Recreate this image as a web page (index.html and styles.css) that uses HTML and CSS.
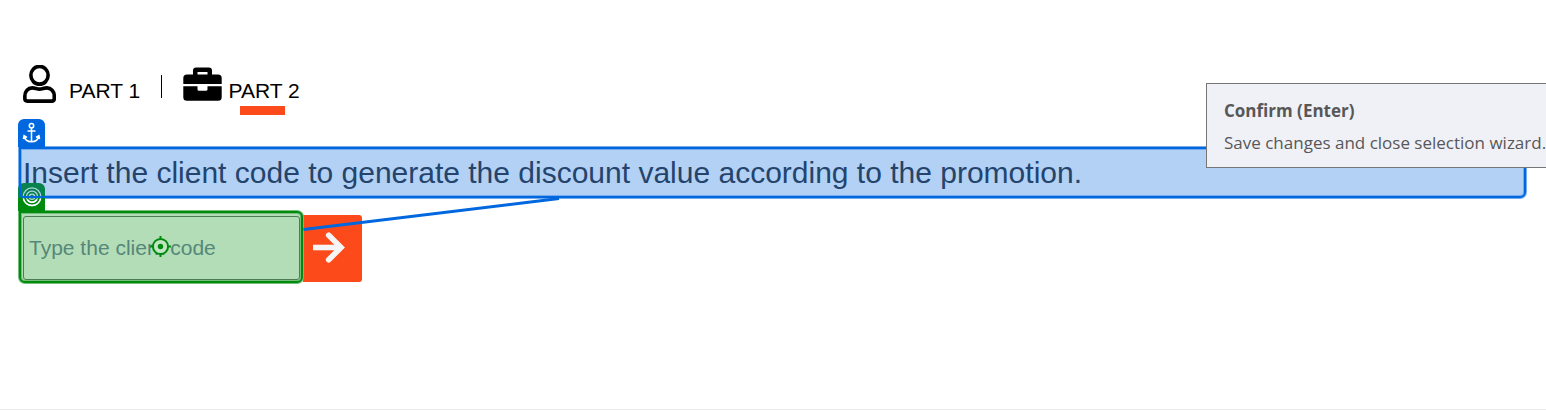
FILE: index.html
```html
<!DOCTYPE html>
<html lang="en">
<head>
<meta charset="utf-8">
<title>Client code</title>
<link rel="stylesheet" href="styles.css">
</head>
<body>
<main class="page">
  <nav class="tabs">
    <a class="tab">
      <svg class="icon-user" viewBox="0 0 34 38" width="33" height="38" preserveAspectRatio="none" fill="none" stroke="#000" stroke-width="3.7"><circle cx="17" cy="10.3" r="8.900"/><path d="M9.500 22.800c3.200 0 4.500 1.300 7.500 1.300s4.300-1.300 7.500-1.300c4.500 0 7.700 3.600 7.700 8.100v2.700c0 1.500-1 2.500-2.500 2.500H4.400c-1.500 0-2.500-1-2.500-2.500v-2.700c0-4.500 3.200-8.100 7.600-8.100z"/></svg>
      <span class="label">PART 1</span>
    </a>
    <span class="divider"></span>
    <a class="tab current">
      <svg class="icon-case" viewBox="0 0 39 35" width="39" height="35"><path fill-rule="evenodd" d="M10 7.500V3.700Q10 .5 13.200.5h12.600Q29 .5 29 3.700v3.800h6q3.700 0 3.700 3.700V17H.3v-5.800q0-3.700 3.700-3.700zM14.500 5v2.500h10V5zM.3 19.300h14.200v3q0 1.500 1.500 1.500h7q1.500 0 1.500-1.500v-3h14.200v11q0 3.500-3.700 3.500H4Q.3 33.800.3 30.300z"/></svg>
      <span class="label">PART 2</span>
    </a>
  </nav>
  <section class="anchor-box">
    <span class="tag tag-anchor"><svg viewBox="0 0 27 28" width="27" height="28" fill="none" stroke="#fff" stroke-width="1.5"><circle cx="13.500" cy="6.800" r="2.200"/><path d="M13.500 9v14M9.500 12h8M6.300 17.500c.6 3.300 3.500 5.200 7.200 5.200s6.600-1.900 7.200-5.200M5.400 20l.7-3.300 2.900 1.700M21.600 20l-.7-3.300-2.900 1.700"/></svg></span>
    <p class="prompt">Insert the client code to generate the discount value according to the promotion.</p>
  </section>
  <form class="code-form">
    <div class="target-box">
      <span class="tag tag-target"></span>
      <div class="field">Type the client code</div>
    </div>
    <div class="submit"><svg viewBox="0 0 34 32" width="34" height="32" fill="none" stroke="#f5f5f5" stroke-width="5.600" stroke-linecap="round" stroke-linejoin="round"><path stroke-linecap="butt" d="M1 15.500h27"/><path stroke-linejoin="miter" d="M16.700 3.300 29 15.500 16.700 27.700"/></svg></div>
  </form>
</main>
<footer class="rule"></footer>
<svg class="overlay" viewBox="0 0 1546 411" width="1546" height="411" fill="none">
  <path d="M303.500 229.600 559 198.500" stroke="#0067df" stroke-width="3"/>
  <g stroke="#b0d2e8" stroke-width="1.300"><circle cx="32" cy="196.700" r="8.800"/><circle cx="32" cy="196.700" r="5.600"/><circle cx="32" cy="196.700" r="2.600"/></g>
  <path d="M23.500 199a8.800 8.800 0 0 0 17 0M27.200 199.500a5.600 5.600 0 0 0 9.600 0" stroke="#fff" stroke-width="1.500"/>
  <path d="M20 184v8.500q0 4.500 4 4.500H60" stroke="#0067df" stroke-width="2"/>
  <g stroke="#008a0e" stroke-width="2"><circle cx="160.500" cy="246.500" r="7.600" fill="#c1e4c3"/><path d="M160.500 236v4M160.500 253v4M150 246.500h4M167 246.500h4"/></g>
  <circle cx="160.500" cy="246.500" r="2.700" fill="#008a0e"/>
</svg>
<aside class="tooltip">
  <strong class="tip-title">Confirm (Enter)</strong>
  <span class="tip-text">Save changes and close selection wizard.</span>
</aside>
</body>
</html>
```
FILE: styles.css
```css
* { box-sizing: border-box; }
body {
  margin: 0;
  height: 411px;
  overflow: hidden;
  background: #fff;
  color: #000;
  font-family: "Liberation Sans", Arial, sans-serif;
  position: relative;
  display: flex;
  flex-direction: column;
}
.page { flex: 1; padding: 65px 20px 0 19px; }
.tabs { display: flex; height: 82px; }
.tab { display: flex; position: relative; }
.icon-user { margin: 0 13px 0 4px; }
.icon-case { margin: 2px 6.5px 0 0; }
.label { font-size: 21px; line-height: 24px; margin-top: 14px; white-space: nowrap; width: 72px; }
.divider { width: 1px; height: 23px; margin: 10px 21px 0 20px; background: #000; }
.current::after {
  content: "";
  position: absolute;
  left: 57.3px;
  top: 41px;
  width: 45px;
  height: 9px;
  background: #fc4a1a;
}
.anchor-box, .target-box { position: relative; border: 2px solid; border-radius: 0 6px 6px 6px; }
.anchor-box {
  height: 51px;
  width: 1507px;
  border-color: #0067df;
  background: #b3d1f5;
  box-shadow: 0 0 0 1px #73abed, inset 0 0 0 1px #73abed;
}
.prompt {
  margin: 0 0 0 2px;
  font-size: 30px;
  line-height: 47px;
  color: #24446c;
  white-space: nowrap;
}
.tag { position: absolute; left: -3px; width: 27px; height: 28px; border-radius: 6px 6px 0 0; }
.tag svg { display: block; }
.tag-anchor { top: -30px; background: #0067df; }
.tag-target { top: -30px; background: linear-gradient(#08834c 15px, #008a0e 15px); }
.code-form { display: flex; align-items: center; margin: 13px 0 0; }
.target-box {
  width: 284px;
  height: 72px;
  padding: 3px 1px 1px 2px;
  border-color: #008a0e;
  background: #b3ddb6;
  box-shadow: 0 0 0 1px #73bf79, inset 0 0 0 1px #73bf79;
}
.field {
  width: 277px;
  height: 64px;
  padding-left: 5px;
  border: 1px solid #4b7d50;
  border-radius: 3px;
  font-size: 21px;
  line-height: 62px;
  color: #55877a;
  white-space: nowrap;
}
.submit {
  width: 59px;
  height: 67px;
  margin-top: 3px;
  padding: 17px 0 0 9px;
  border-radius: 0 3px 3px 0;
  background: #fc4a1a;
}
.submit svg { display: block; }
.rule { height: 2px; border-top: 1px solid #ebebeb; }
.overlay { position: absolute; left: 0; top: 0; }
.tooltip {
  position: absolute;
  left: 1206px;
  top: 83px;
  width: 350px;
  height: 85px;
  padding: 15px 0 0 17px;
  display: flex;
  flex-direction: column;
  gap: 8px;
  border: 1px solid #767676;
  background: #f0f1f7;
  color: #575757;
  font-family: "Open Sans", "Noto Sans", sans-serif;
  font-size: 17px;
  line-height: 24px;
  white-space: nowrap;
}
```
